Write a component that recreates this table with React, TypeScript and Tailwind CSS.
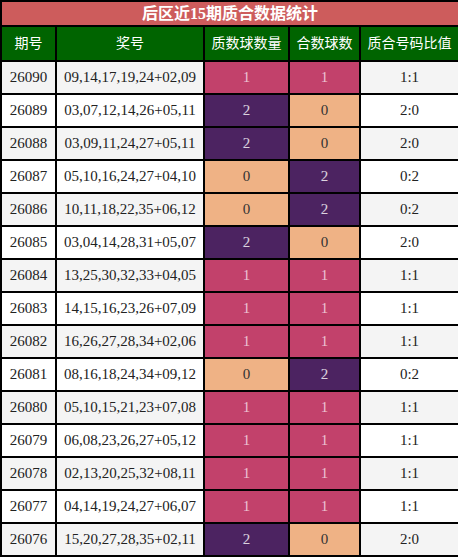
const rows: [string, string, number, number][] = [
  ['26090', '09,14,17,19,24+02,09', 1, 1],
  ['26089', '03,07,12,14,26+05,11', 2, 0],
  ['26088', '03,09,11,24,27+05,11', 2, 0],
  ['26087', '05,10,16,24,27+04,10', 0, 2],
  ['26086', '10,11,18,22,35+06,12', 0, 2],
  ['26085', '03,04,14,28,31+05,07', 2, 0],
  ['26084', '13,25,30,32,33+04,05', 1, 1],
  ['26083', '14,15,16,23,26+07,09', 1, 1],
  ['26082', '16,26,27,28,34+02,06', 1, 1],
  ['26081', '08,16,18,24,34+09,12', 0, 2],
  ['26080', '05,10,15,21,23+07,08', 1, 1],
  ['26079', '06,08,23,26,27+05,12', 1, 1],
  ['26078', '02,13,20,25,32+08,11', 1, 1],
  ['26077', '04,14,19,24,27+06,07', 1, 1],
  ['26076', '15,20,27,28,35+02,11', 2, 0],
];

const countCls: Record<number, string> = {
  0: 'bg-[#efb285] text-[#333]',
  1: 'bg-[#c2416b] text-white/70',
  2: 'bg-[#4c2361] text-white/80',
};

function App() {
  return (
    <div className="w-[458px] h-[557px] bg-white font-['Liberation_Serif','Noto_Sans_CJK_SC',serif]">
      <table className="w-[458px] table-fixed border-collapse border-2 border-black text-center text-[15px] text-[#222]">
        <colgroup>
          <col className="w-[55px]" />
          <col className="w-[148px]" />
          <col className="w-[85px]" />
          <col className="w-[71px]" />
          <col className="w-[99px]" />
        </colgroup>
        <thead>
          <tr className="h-[25px]">
            <th colSpan={5} className="bg-[#cd5c5c] text-white text-[16px] font-bold border-2 border-black p-0 leading-none">
              后区近15期质合数据统计
            </th>
          </tr>
          <tr className="h-[35px] bg-[#006400] text-white text-[14px] font-normal">
            <th className="border-2 border-black font-normal p-0">期号</th>
            <th className="border-2 border-black font-normal p-0">奖号</th>
            <th className="border-2 border-black font-normal p-0">质数球数量</th>
            <th className="border-2 border-black font-normal p-0">合数球数</th>
            <th className="border-2 border-black font-normal p-0">质合号码比值</th>
          </tr>
        </thead>
        <tbody>
          {rows.map(([issue, nums, p, c], i) => (
            <tr key={issue} className={'h-[33px] ' + (i % 2 === 0 ? 'bg-[#f4f4f4]' : 'bg-white')}>
              <td className="border-2 border-black p-0">{issue}</td>
              <td className="border-2 border-black p-0">{nums}</td>
              <td className={'border-2 border-black p-0 ' + countCls[p]}>{p}</td>
              <td className={'border-2 border-black p-0 ' + countCls[c]}>{c}</td>
              <td className="border-2 border-black p-0">{p}:{c}</td>
            </tr>
          ))}
        </tbody>
      </table>
    </div>
  );
}

export default App
